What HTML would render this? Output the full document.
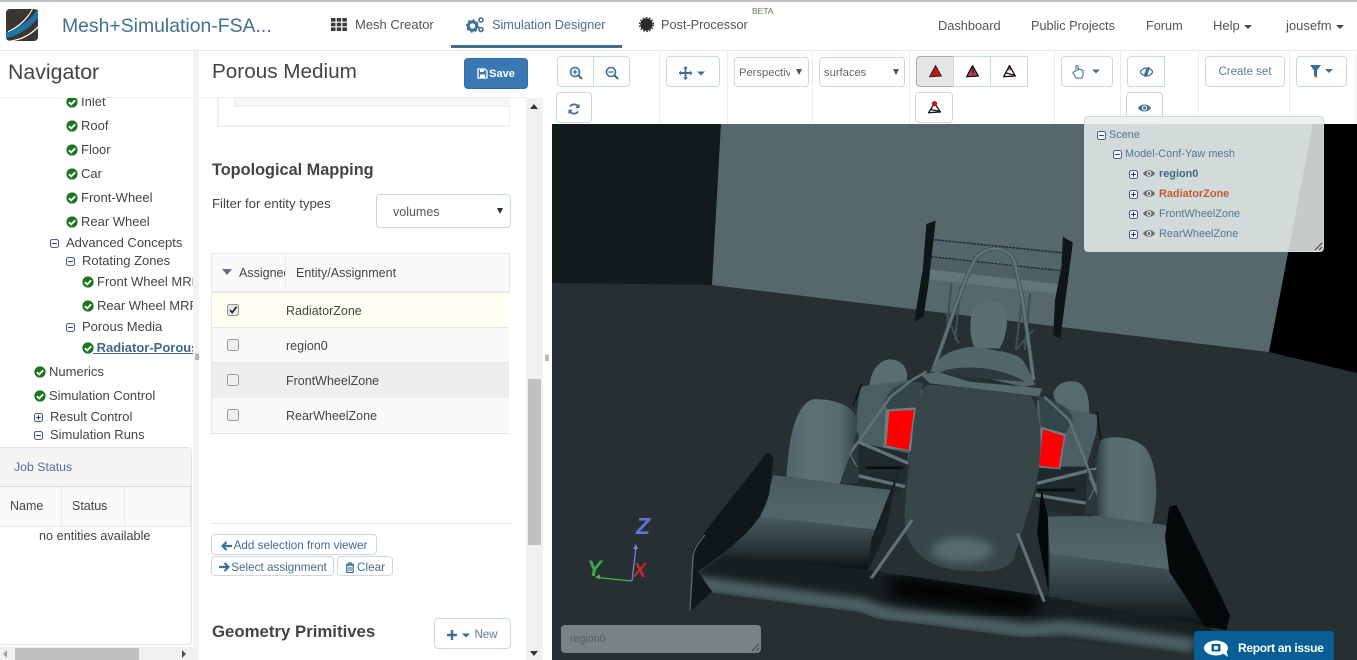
<!DOCTYPE html>
<html><head><meta charset="utf-8"><title>Porous Medium</title>
<style>
html,body{margin:0;padding:0;width:1357px;height:660px;overflow:hidden;background:#fff;font-family:"Liberation Sans",sans-serif;color:#444}
.a,.t,.b{position:absolute}
.t{white-space:nowrap;line-height:20px;font-size:13px}
.b{box-sizing:border-box;border:1px solid #c9dade;border-radius:4px;background:#fff;color:#4a6a85;white-space:nowrap;display:flex;align-items:center;justify-content:center;font-size:11.7px;padding-top:2px}
svg.i{position:absolute;overflow:visible}
.sel{color:#666;justify-content:flex-start}
.v{position:absolute;width:1px;top:50px;height:74px;background:#e9eeee}
.tr{position:absolute;white-space:nowrap;font-size:10.9px;line-height:14px;color:#4f7a90}
</style></head><body>
<svg width="0" height="0" style="position:absolute">
<symbol id="ok" viewBox="0 0 12 12"><circle cx="6" cy="6" r="5.6" fill="#19761c"/><path d="M3 6.2l2.2 2.2L9.2 4.3" fill="none" stroke="#fff" stroke-width="1.9"/></symbol>
<symbol id="mi" viewBox="0 0 10 10"><rect x=".6" y=".6" width="8.8" height="8.8" rx="1.8" fill="#f4f6fb" stroke="#3b4a80"/><path d="M2.5 5h5" stroke="#2b3670" stroke-width="1.1"/></symbol>
<symbol id="pl" viewBox="0 0 10 10"><rect x=".6" y=".6" width="8.8" height="8.8" rx="1.8" fill="#f4f6fb" stroke="#3b4a80"/><path d="M2.5 5h5M5 2.5v5" stroke="#2b3670" stroke-width="1.1"/></symbol>
<symbol id="eye" viewBox="0 0 14 10"><path d="M0 5C3 0 11 0 14 5 11 10 3 10 0 5z" fill="currentColor"/><circle cx="7" cy="5" r="2.8" fill="#fff"/><circle cx="7" cy="5" r="1.7" fill="currentColor"/></symbol>
</svg>

<!-- top bar -->
<div class="a" style="left:0;top:0;width:1357px;height:2px;background:#c4c4c4"></div>
<div class="a" style="left:0;top:50px;width:1357px;height:1px;background:#e9e9e9"></div>
<svg class="i" style="left:6px;top:9px" width="32" height="32" viewBox="0 0 32 32"><rect width="32" height="32" rx="4" fill="#3b3633"/><path d="M0 23C13 20 24 11 32 0V9C24 19 12 27 0 29z" fill="#1c75a8"/><path d="M2 22C13 17 21 9 26 0h1C22 10 13 19 2 23zM0 32C13 31 24 26 32 17v2C25 26 16 31 7 32z" fill="#fff"/></svg>
<div class="t" style="left:62px;top:16px;font-size:19.4px;color:#44708f">Mesh+Simulation-FSA...</div>

<svg class="i" style="left:331px;top:18px" width="16" height="13" viewBox="0 0 16 13" fill="#3f3a38"><rect width="4.5" height="3.6"/><rect x="5.7" width="4.5" height="3.6"/><rect x="11.4" width="4.5" height="3.6"/><rect y="4.7" width="4.5" height="3.6"/><rect x="5.7" y="4.7" width="4.5" height="3.6"/><rect x="11.4" y="4.7" width="4.5" height="3.6"/><rect y="9.4" width="4.5" height="3.6"/><rect x="5.7" y="9.4" width="4.5" height="3.6"/><rect x="11.4" y="9.4" width="4.5" height="3.6"/></svg>
<div class="t" style="left:355px;top:15px;color:#555">Mesh Creator</div>
<svg class="i" style="left:466px;top:16px" width="19" height="17" viewBox="0 0 19 17"><circle cx="6.5" cy="10" r="4.2" fill="none" stroke="#3f6f95" stroke-width="3"/><circle cx="6.5" cy="10" r="6" fill="none" stroke="#3f6f95" stroke-width="1.4" stroke-dasharray="2 2.7"/><circle cx="15" cy="4" r="2" fill="none" stroke="#3f6f95" stroke-width="1.6"/><circle cx="15" cy="13.5" r="2" fill="none" stroke="#3f6f95" stroke-width="1.6"/></svg>
<div class="t" style="left:492px;top:15px;color:#4f6f88;font-size:12.7px">Simulation Designer</div>
<div class="a" style="left:451px;top:45px;width:171px;height:3px;background:#3f6f95"></div>
<svg class="i" style="left:639px;top:17px" width="15" height="15" viewBox="0 0 15 15"><circle cx="7.5" cy="7.5" r="6.2" fill="#2b2826"/><circle cx="7.5" cy="7.5" r="7" fill="none" stroke="#2b2826" stroke-width="1.2" stroke-dasharray="1.6 1.6"/></svg>
<div class="t" style="left:661px;top:15px;color:#555;font-size:12.7px">Post-Processor</div>
<div class="t" style="left:752px;top:1px;font-size:8.5px;color:#5d7d50">BETA</div>

<div class="t" style="left:938px;top:16px;color:#555;font-size:12.8px">Dashboard</div>
<div class="t" style="left:1031px;top:16px;color:#555;font-size:12.7px">Public Projects</div>
<div class="t" style="left:1146px;top:16px;color:#555;font-size:12.7px">Forum</div>
<div class="t" style="left:1213px;top:16px;color:#555">Help</div>
<div class="a" style="left:1244px;top:25px;border:4px solid transparent;border-top-color:#444;border-bottom:0"></div>
<div class="t" style="left:1286px;top:16px;color:#555">jousefm</div>
<div class="a" style="left:1336px;top:25px;border:4px solid transparent;border-top-color:#444;border-bottom:0"></div>

<!-- navigator -->
<div class="a" style="left:193px;top:51px;width:6px;height:609px;background:#f3f3f3"></div>
<div class="t" style="left:8px;top:62px;font-size:21.3px;color:#444">Navigator</div>
<div class="a" style="left:0;top:97px;width:193px;height:1px;background:#eee"></div>
<div class="a" style="left:0;top:98px;width:193px;height:349px;overflow:hidden"><div class="a" style="left:0;top:1px;width:193px;height:348px">
<svg class="i" style="left:66px;top:-3px" width="12" height="12"><use href="#ok"/></svg><div class="t" style="left:81px;top:-7px">Inlet</div>
<svg class="i" style="left:66px;top:21px" width="12" height="12"><use href="#ok"/></svg><div class="t" style="left:81px;top:17px">Roof</div>
<svg class="i" style="left:66px;top:45px" width="12" height="12"><use href="#ok"/></svg><div class="t" style="left:81px;top:41px">Floor</div>
<svg class="i" style="left:66px;top:69px" width="12" height="12"><use href="#ok"/></svg><div class="t" style="left:81px;top:65px">Car</div>
<svg class="i" style="left:66px;top:93px" width="12" height="12"><use href="#ok"/></svg><div class="t" style="left:81px;top:89px">Front-Wheel</div>
<svg class="i" style="left:66px;top:117px" width="12" height="12"><use href="#ok"/></svg><div class="t" style="left:81px;top:113px">Rear Wheel</div>
<svg class="i" style="left:50px;top:140px" width="9" height="9"><use href="#mi"/></svg><div class="t" style="left:66px;top:134px">Advanced Concepts</div>
<svg class="i" style="left:66px;top:158px" width="9" height="9"><use href="#mi"/></svg><div class="t" style="left:82px;top:152px">Rotating Zones</div>
<svg class="i" style="left:82px;top:177px" width="12" height="12"><use href="#ok"/></svg><div class="t" style="left:97px;top:173px">Front Wheel MRF</div>
<svg class="i" style="left:82px;top:201px" width="12" height="12"><use href="#ok"/></svg><div class="t" style="left:97px;top:197px">Rear Wheel MRF</div>
<svg class="i" style="left:66px;top:224px" width="9" height="9"><use href="#mi"/></svg><div class="t" style="left:82px;top:218px">Porous Media</div>
<svg class="i" style="left:82px;top:243px" width="12" height="12"><use href="#ok"/></svg><div class="t" style="left:93px;top:239px;font-weight:bold;color:#40688a;text-decoration:underline">&nbsp;Radiator-Porous</div>
<svg class="i" style="left:34px;top:267px" width="12" height="12"><use href="#ok"/></svg><div class="t" style="left:49px;top:263px">Numerics</div>
<svg class="i" style="left:34px;top:291px" width="12" height="12"><use href="#ok"/></svg><div class="t" style="left:49px;top:287px">Simulation Control</div>
<svg class="i" style="left:34px;top:314px" width="9" height="9"><use href="#pl"/></svg><div class="t" style="left:50px;top:308px">Result Control</div>
<svg class="i" style="left:34px;top:332px" width="9" height="9"><use href="#mi"/></svg><div class="t" style="left:50px;top:326px">Simulation Runs</div>
</div></div>
<!-- job status -->
<div class="a" style="left:-2px;top:447px;width:194px;height:198px;box-sizing:border-box;border:1px solid #e4e4e4;border-radius:4px;background:#fff"></div>
<div class="a" style="left:0;top:448px;width:191px;height:38px;background:#f5f5f5;border-bottom:1px solid #ddd"></div>
<div class="t" style="left:14px;top:457px;font-size:12.3px;color:#4f6f93">Job Status</div>
<div class="a" style="left:0;top:487px;width:190px;height:39px;background:#fafafa;border-bottom:1px solid #e8e8e8;border-right:1px solid #e8e8e8"></div>
<div class="a" style="left:61px;top:487px;width:1px;height:39px;background:#e8e8e8"></div>
<div class="a" style="left:124px;top:487px;width:1px;height:39px;background:#e8e8e8"></div>
<div class="t" style="left:10px;top:496px;font-size:12.5px">Name</div>
<div class="t" style="left:72px;top:496px;font-size:12.5px">Status</div>
<div class="t" style="left:39px;top:526px;font-size:12.7px">no entities available</div>
<div class="a" style="left:0;top:647px;width:193px;height:13px;background:#f1f1f1"></div>
<div class="a" style="left:15px;top:648px;width:124px;height:12px;background:#c1c1c1"></div>
<div class="a" style="left:3px;top:650px;border:4px solid transparent;border-right-color:#a3a3a3;border-left:0"></div>
<div class="a" style="left:182px;top:650px;border:4px solid transparent;border-left-color:#505050;border-right:0"></div>

<!-- porous medium panel -->
<div class="t" style="left:212px;top:62px;font-size:20.7px;color:#444">Porous Medium</div>
<div class="b" style="left:464px;top:58px;width:64px;height:31px;padding-top:0;background:#3a78b3;border-color:#2f6ca5;color:#fff;font-weight:bold;font-size:11px"><svg width="11" height="11" viewBox="0 0 11 11" style="margin-right:1px"><path d="M1 1h7l2 2v7H1z" fill="none" stroke="#fff" stroke-width="1.3"/><path d="M3 1.5h4v2.5H3zM3 6.5h5v3H3z" fill="#fff"/></svg>Save</div>
<div class="a" style="left:199px;top:97px;width:328px;height:1px;background:#eee"></div>
<div class="a" style="left:217px;top:98px;width:293px;height:29px;box-sizing:border-box;border:2px solid #eee;border-top:0;border-right:1px solid #eee"></div>
<div class="a" style="left:234px;top:98px;width:276px;height:9px;background:#f5f5f5;border-left:2px solid #eee;border-bottom:1px solid #eee;box-sizing:border-box"></div>
<div class="t" style="left:212px;top:160px;font-size:16.3px;font-weight:bold;color:#444">Topological Mapping</div>
<div class="t" style="left:212px;top:194px;font-size:13.2px;color:#444">Filter for entity types</div>
<div class="b sel" style="left:376px;top:194px;width:135px;height:34px;padding-left:16px;font-size:12.5px;color:#555">volumes</div>
<div class="a" style="left:497px;top:208px;border:3.5px solid transparent;border-top:6px solid #333;border-bottom:0"></div>

<div class="a" style="left:211px;top:253px;width:299px;height:40px;background:#fafafa;border:1px solid #e8e8e8;border-bottom:2px solid #e8e8e8;box-sizing:border-box"></div>
<div class="a" style="left:285px;top:254px;width:1px;height:38px;background:#e8e8e8"></div>
<div class="a" style="left:222px;top:269px;border:5px solid transparent;border-top:6px solid #667080;border-bottom:0"></div>
<div class="a" style="left:239px;top:263px;width:46px;overflow:hidden"><div class="t" style="position:static;font-size:12.5px">Assigned</div></div>
<div class="t" style="left:296px;top:263px;font-size:12.5px">Entity/Assignment</div>
<div class="a" style="left:211px;top:293px;width:298px;height:35px;background:#fffff2;border-left:1px solid #e8e8e8;border-bottom:1px solid #e8e8e8;box-sizing:border-box"></div>
<div class="a" style="left:211px;top:328px;width:298px;height:35px;background:#fafafa;border-left:1px solid #e8e8e8;border-bottom:1px solid #e8e8e8;box-sizing:border-box"></div>
<div class="a" style="left:211px;top:363px;width:298px;height:35px;background:#eee;border-left:1px solid #e8e8e8;box-sizing:border-box"></div>
<div class="a" style="left:211px;top:398px;width:298px;height:36px;background:#fafafa;border-left:1px solid #e8e8e8;border-bottom:1px solid #e4e4e4;box-sizing:border-box"></div>
<div class="a" style="left:227px;top:304px;width:12px;height:12px;box-sizing:border-box;border:1px solid #8f8f8f;border-radius:2.5px;background:#e8e8e8"></div>
<svg class="i" style="left:227px;top:304px" width="12" height="12"><path d="M3 6l2.2 2.5L9.5 2.8" fill="none" stroke="#222" stroke-width="1.7"/></svg>
<div class="a" style="left:227px;top:339px;width:12px;height:12px;box-sizing:border-box;border:1px solid #9a9a9a;border-radius:2.5px;background:#efefef"></div>
<div class="a" style="left:227px;top:374px;width:12px;height:12px;box-sizing:border-box;border:1px solid #9a9a9a;border-radius:2.5px;background:#efefef"></div>
<div class="a" style="left:227px;top:409px;width:12px;height:12px;box-sizing:border-box;border:1px solid #9a9a9a;border-radius:2.5px;background:#efefef"></div>
<div class="t" style="left:286px;top:301px;font-size:12.5px">RadiatorZone</div>
<div class="t" style="left:286px;top:336px;font-size:12.5px">region0</div>
<div class="t" style="left:286px;top:371px;font-size:12.5px">FrontWheelZone</div>
<div class="t" style="left:286px;top:406px;font-size:12.5px">RearWheelZone</div>

<div class="a" style="left:211px;top:523px;width:300px;height:1px;background:#e3e9ea"></div>
<div class="b" style="left:211px;top:534px;width:166px;height:21px"><svg width="12" height="10" viewBox="0 0 12 10" style="margin-right:1px"><path d="M11 5H2M5.5 1L1.5 5l4 4" fill="none" stroke="#3f6f95" stroke-width="2.2"/></svg>Add selection from viewer</div>
<div class="b" style="left:211px;top:556px;width:123px;height:20px"><svg width="12" height="10" viewBox="0 0 12 10" style="margin-right:1px"><path d="M1 5h9M6.5 1l4 4-4 4" fill="none" stroke="#3f6f95" stroke-width="2.2"/></svg>Select assignment</div>
<div class="b" style="left:337px;top:556px;width:56px;height:20px"><svg width="10" height="11" viewBox="0 0 10 11" style="margin-right:2px"><path d="M1 2.5h8M3.5 2.5V1h3v1.5M1.8 3v7.5h6.4V3z" fill="none" stroke="#3f6f95" stroke-width="1.3"/><path d="M4 4.5v4.5M6 4.5v4.5" stroke="#3f6f95"/></svg>Clear</div>
<div class="t" style="left:212px;top:622px;font-size:16.8px;font-weight:bold;color:#444">Geometry Primitives</div>
<div class="b" style="left:434px;top:618px;width:77px;height:31px;font-size:11.5px;color:#5b7c95"><svg width="24" height="10" viewBox="0 0 24 10" style="margin-right:3px"><path d="M5 0v10M0 5h10" stroke="#3f6f95" stroke-width="2.4"/><path d="M15 3.5h8l-4 4z" fill="#3f6f95"/></svg>New</div>

<div class="a" style="left:526px;top:98px;width:17px;height:562px;background:#f1f1f1"></div>
<div class="a" style="left:528px;top:379px;width:13px;height:166px;background:#c1c1c1"></div>
<div class="a" style="left:530px;top:104px;border:4px solid transparent;border-bottom:5px solid #333;border-top:0"></div>
<div class="a" style="left:530px;top:651px;border:4px solid transparent;border-top:5px solid #333;border-bottom:0"></div>
<div class="t" style="left:545px;top:348px;font-size:9px;color:#555">ll</div>
<div class="t" style="left:195px;top:347px;font-size:9px;color:#555">ll</div>

<!-- toolbar -->
<div class="v" style="left:659px"></div><div class="v" style="left:727px"></div><div class="v" style="left:812px"></div><div class="v" style="left:909px"></div><div class="v" style="left:1054px"></div><div class="v" style="left:1120px"></div><div class="v" style="left:1198px"></div><div class="v" style="left:1289px"></div><div class="v" style="left:1355px"></div>

<div class="b" style="left:557px;top:56px;width:37px;height:31px;border-radius:4px 0 0 4px"><svg width="14" height="14" viewBox="0 0 14 14"><circle cx="6" cy="6" r="4.5" fill="none" stroke="#3f6f95" stroke-width="1.6"/><path d="M9.5 9.5L13 13" stroke="#3f6f95" stroke-width="2.2"/><path d="M3.5 6h5M6 3.5v5" stroke="#3f6f95" stroke-width="1.3"/></svg></div>
<div class="b" style="left:593px;top:56px;width:37px;height:31px;border-radius:0 4px 4px 0"><svg width="14" height="14" viewBox="0 0 14 14"><circle cx="6" cy="6" r="4.5" fill="none" stroke="#3f6f95" stroke-width="1.6"/><path d="M9.5 9.5L13 13" stroke="#3f6f95" stroke-width="2.2"/><path d="M3.5 6h5" stroke="#3f6f95" stroke-width="1.3"/></svg></div>
<div class="b" style="left:556px;top:92px;width:36px;height:31px"><svg width="12" height="12" viewBox="0 0 12 12"><path d="M10.5 4.5A4.8 4.8 0 0 0 2 3.5M1.5 7.5A4.8 4.8 0 0 0 10 8.5" fill="none" stroke="#3f6f95" stroke-width="1.8"/><path d="M11.5 .8v4.5H7zM.5 11.2V6.7H5z" fill="#3f6f95"/></svg></div>
<div class="b" style="left:666px;top:56px;width:54px;height:31px"><svg width="28" height="14" viewBox="0 0 28 14"><path d="M6.5 0l2.5 2.5H7.400V6h3.600V4.500L13.500 7 11 9.500V8H7.400v3.500H9L6.500 14 4 11.500h1.600V8H2v1.500L-.5 7 2 4.500V6h3.600V2.500H4z" fill="#3f6f95"/><path d="M18 5.500h8l-4 4z" fill="#3f6f95"/></svg></div>
<div class="b sel" style="left:734px;top:57px;width:75px;height:30px;padding-left:4px;font-size:11.2px;overflow:hidden"><span style="width:51px;overflow:hidden;display:block">Perspective</span></div>
<div class="a" style="left:796px;top:69px;border:3.5px solid transparent;border-top:6px solid #555;border-bottom:0"></div>
<div class="b sel" style="left:819px;top:57px;width:86px;height:30px;padding-left:4px;font-size:11.2px">surfaces</div>
<div class="a" style="left:893px;top:69px;border:3.5px solid transparent;border-top:6px solid #555;border-bottom:0"></div>

<div class="b" style="left:916px;top:56px;width:38px;height:31px;padding-top:0;background:#e6e6e6;border-color:#adadad;border-radius:4px 0 0 4px"><svg width="13" height="13" viewBox="0 0 20 20"><path d="M10 1L1 18l18-1z" fill="#c8101a" stroke="#222" stroke-width="1.5"/></svg></div>
<div class="b" style="left:953px;top:56px;width:38px;height:31px;padding-top:0;border-radius:0"><svg width="13" height="13" viewBox="0 0 20 20"><path d="M10 1L1 18l18-1z" fill="#c8404a" stroke="#111" stroke-width="2"/><path d="M10 1l1 13" stroke="#222" stroke-width="2"/></svg></div>
<div class="b" style="left:990px;top:56px;width:38px;height:31px;padding-top:0;border-radius:0"><svg width="13" height="13" viewBox="0 0 20 20"><path d="M10 1L7 8h6z" fill="#c55"/><path d="M10 1L1 18l18-1zM4 12l14 4" fill="none" stroke="#111" stroke-width="2"/></svg></div>
<div class="b" style="left:915px;top:92px;width:38px;height:31px;padding-top:0"><svg width="13" height="13" viewBox="0 0 20 20"><path d="M10 3L1 18l18-1zM4 13l14 3" fill="none" stroke="#111" stroke-width="2"/><circle cx="10" cy="4" r="4" fill="#c8101a"/></svg></div>

<div class="b" style="left:1061px;top:56px;width:52px;height:31px;padding-top:0;color:#3f6f95"><svg width="30" height="15" viewBox="0 0 30 15"><path d="M4 7V3c0-2 2-2 2 0v3l1-1 1 .5 1 0 1 .5 1 .5v5l-1 2.5H4L1 9c0-1 1-1.500 3-2z" fill="#fff" stroke="#3f6f95" stroke-width="1.1"/><path d="M20 5.5h8l-4 4z" fill="#3f6f95"/></svg></div>
<div class="b" style="left:1127px;top:56px;width:38px;height:31px;padding-top:0;border-radius:4px 0 0 4px;color:#3f6f95"><svg width="13" height="10" viewBox="0 0 13 10"><path d="M0 5C2 2 4.5 1 7 1L4.5 8.5C3 8 1.5 7 0 5zM13 5C11 8 8.5 9 6.5 9L9 1.5C10.5 2 12 3 13 5z" fill="none" stroke="#3f6f95" stroke-width="1.3"/><path d="M9 0L5 10" stroke="#3f6f95" stroke-width="1.5"/></svg></div>
<div class="b" style="left:1126px;top:92px;width:37px;height:31px;padding-top:0;color:#3f6f95"><svg width="13" height="10"><use href="#eye"/></svg></div>
<div class="b" style="left:1205px;top:56px;width:80px;height:31px;padding-top:0;color:#5b7c95;font-size:11.5px">Create set</div>
<div class="b" style="left:1296px;top:56px;width:51px;height:31px;padding-top:0"><svg width="24" height="13" viewBox="0 0 24 13"><path d="M0 0h11L7 5.5V13L4 11V5.5z" fill="#3f6f95"/><path d="M15 4h8l-4 4z" fill="#3f6f95"/></svg></div>

<!-- viewer -->
<svg class="a" style="left:552px;top:124px" width="805" height="536" viewBox="552 124 805 536">
<defs>
<linearGradient id="g1" x1="0" y1="0" x2="0" y2="1"><stop offset="0" stop-color="#4a5c61"/><stop offset=".55" stop-color="#2a383b"/><stop offset="1" stop-color="#0c1214"/></linearGradient>
<linearGradient id="g0" x1="0" y1="0" x2="0" y2="1"><stop offset="0" stop-color="#495b60"/><stop offset="1" stop-color="#55686d"/></linearGradient>
<linearGradient id="g3" x1="0" y1="0" x2="1" y2="0"><stop offset="0" stop-color="#52656a"/><stop offset=".35" stop-color="#5e7176"/><stop offset=".75" stop-color="#586b70"/><stop offset="1" stop-color="#34454a"/></linearGradient>
<linearGradient id="g4" x1="0" y1="0" x2="1" y2="0"><stop offset="0" stop-color="#2e3f43"/><stop offset=".2" stop-color="#56696e"/><stop offset=".7" stop-color="#5b6e73"/><stop offset="1" stop-color="#4e6166"/></linearGradient>
<clipPath id="cp"><path d="M40 1140C60 1110 90 1090 120 1068L525 1110 1035 1190 1480 1280 1540 1345 1430 1365 1000 1310C970 1315 950 1312 900 1305L600 1262C560 1262 530 1250 510 1238L40 1172z"/></clipPath>
<filter id="b8" x="-30%" y="-60%" width="160%" height="220%"><feGaussianBlur stdDeviation="12"/></filter>
<filter id="b20" x="-30%" y="-60%" width="160%" height="220%"><feGaussianBlur stdDeviation="22"/></filter>
</defs>
<rect x="552" y="124" width="805" height="536" fill="#262f31"/>
<path d="M552 124H721L712 285 552 283z" fill="#131a1b"/>
<path d="M721 124H1313L1269 352 712 285z" fill="#56686c"/>
<path d="M1313 124H1357V373L1269 352z" fill="#000"/>
<g transform="translate(680 200) scale(.35714 .33333)">
<!-- rear wing -->
<path d="M700 115L1070 155 1075 285 675 235z" fill="#4e6065"/>
<path d="M703 122L1066 165V210L703 170z" fill="#53666b"/>
<path d="M703 118L1068 158M703 170L1066 212" stroke="#20292b" stroke-width="4" stroke-dasharray="7 3"/>
<path d="M675 205L1080 255V285L675 235z" fill="#62767b"/>
<path d="M690 72L716 62 696 250 682 350 657 365 664 310 680 205z" fill="#0e1618"/>
<path d="M1072 110L1100 128 1084 260 1065 415 1045 405 1050 300 1068 200z" fill="#0e1618"/>
<!-- struts behind head -->
<path d="M760 250L745 410M785 260L770 420M980 280L965 450M960 280L940 450M745 340L780 430M990 390L940 450" stroke="#3f5055" stroke-width="6" fill="none"/>
<path d="M710 505C760 360 790 250 825 180 850 135 915 135 935 180 960 280 975 420 990 540" fill="none" stroke="#3c4c51" stroke-width="12"/>
<path d="M710 505C760 360 790 250 825 180 850 135 915 135 935 180 960 280 975 420 990 540" fill="none" stroke="#5f7378" stroke-width="8"/>
<!-- head, shoulders -->
<path d="M825 445C815 420 810 390 815 350 825 290 905 285 915 345 918 395 905 425 895 445z" fill="#5b6e73"/>
<path d="M700 515C720 470 760 445 825 440 870 450 930 455 955 475 975 500 985 535 995 555L960 560 800 520z" fill="#52656a"/>
<path d="M730 515C780 495 890 495 965 545L780 530z" fill="#2c3a3d"/>
<!-- rear tyres, sidepods -->
<path d="M530 570C530 510 560 478 590 478 625 480 640 510 635 540L620 600H540z" fill="#5a6d72"/>
<path d="M1045 580C1055 550 1080 540 1110 545 1140 555 1148 600 1145 650L1060 640z" fill="#566a6f"/>
<path d="M490 680L505 560 640 540 680 570 640 780H520z" fill="#4b5e63"/>
<path d="M1000 600L1100 630 1170 645 1165 700 1110 900H1000z" fill="#4b5e63"/>
<path d="M510 550L485 615" stroke="#0f1719" stroke-width="5"/>
<path d="M1168 635L1178 720" stroke="#0f1719" stroke-width="5"/>
<path d="M575 600C590 550 640 540 680 550L660 640 580 640z" fill="#35464a"/>
<path d="M1005 590C1050 600 1095 620 1100 660L1080 700 1010 680z" fill="#35464a"/>
<path d="M470 720L640 760 620 880 450 860zM1000 800L1170 800 1170 950 1000 930z" fill="#1f2a2c"/>
<!-- red zones -->
<path d="M576 628L660 622 660 755 570 742z" fill="#6f7d80"/>
<path d="M586 634L655 630 640 750 578 736z" fill="#f00"/>
<path d="M1010 680L1080 702 1065 808 1000 802z" fill="#6f7d80"/>
<path d="M1016 688L1075 708 1060 804 1006 797z" fill="#f00"/>
<!-- suspension -->
<path d="M520 803H625" stroke="#0a0f10" stroke-width="8"/>
<path d="M1000 870H1105" stroke="#0a0f10" stroke-width="8"/>
<path d="M465 710L640 790M450 815L630 860M1170 805L1000 850M1170 915L995 885" stroke="#5f7378" stroke-width="10"/>
<path d="M470 700L450 850 500 850 500 700zM1140 810L1180 810 1170 950 1135 940z" fill="#2b383b"/>
<path d="M460 730L495 800M490 730L455 810M1145 830L1175 900M1175 830L1145 900" stroke="#697b80" stroke-width="3"/>
<path d="M690 515L650 540 590 590 470 770M1020 590L1090 660 1170 880" fill="none" stroke="#5f7378" stroke-width="7"/>
<!-- front tyres -->
<path d="M298 830C305 720 320 620 370 598 420 595 475 610 495 650 505 690 465 790 448 852z" fill="url(#g3)"/>
<path d="M1170 950C1170 880 1155 780 1180 720 1205 705 1270 710 1300 740 1340 790 1340 890 1322 972z" fill="url(#g4)"/>
<!-- main plane -->
<g clip-path="url(#cp)">
<rect x="0" y="1040" width="1568" height="340" fill="#161f21"/>
<path d="M40 1150L510 1218C560 1246 620 1246 700 1256L950 1290C1000 1296 1030 1280 1100 1286L1440 1338" fill="none" stroke="#4e6065" stroke-width="46" filter="url(#b8)"/>
<path d="M590 1160L1000 1215" stroke="#000" stroke-width="70" filter="url(#b20)"/>
</g>
<!-- nose -->
<path d="M690 555C760 555 900 570 985 590 1010 650 1015 720 1005 800 995 890 960 980 935 1075 915 1110 880 1118 800 1112 720 1110 670 1080 640 1020 615 960 640 830 650 720 655 640 665 590 690 555z" fill="#374749"/>
<path d="M675 525L720 515 810 545 1015 565 1005 590 900 575 700 550z" fill="#56696e"/>
<ellipse cx="790" cy="1050" rx="85" ry="38" fill="#566a6f" filter="url(#b8)"/>
<!-- front wing flaps -->
<path d="M262 825L450 852 590 870 555 990 225 950z" fill="url(#g0)"/>
<path d="M225 950L555 990 525 1110 120 1068z" fill="url(#g1)"/>
<path d="M1030 950L1170 948 1360 975 1370 1110 1035 1065z" fill="url(#g0)"/>
<path d="M1035 1060L1370 1108 1480 1280 1035 1190z" fill="url(#g1)"/>
<!-- endplates -->
<path d="M35 1050C90 960 180 850 245 755L262 775 250 880C230 960 190 1000 120 1060L50 1115 90 1175 28 1235 38 1100z" fill="#101719"/>
<path d="M28 1232L36 1080C36 1050 50 1030 70 1005" fill="none" stroke="#53666b" stroke-width="4"/>
<path d="M1370 920L1390 915 1540 1245 1530 1290 1470 1280 1370 1115 1358 1010z" fill="#050808"/>
<path d="M610 815L575 1000 527 1110 535 1020z" fill="#161f21"/>
<path d="M1012 870L1030 950 1032 1175 1000 1000z" fill="#050808"/>
<path d="M650 960L535 1135M945 1000L1020 1205" stroke="#5f7378" stroke-width="9"/>
</g>
<!-- axes -->
<path d="M632 581L636 547" stroke-width="1.2" fill="none" stroke="#7a80ea"/>
<path d="M632 581L597 577.5" stroke="#4bb558" stroke-width="1.2"/>
<path d="M636 544l-3 5h5z" fill="#7a80ea"/><path d="M595 577l5-2.5v4.5z" fill="#4bb558"/>
<text x="636" y="534" font-family="Liberation Sans" font-size="23" font-weight="bold" font-style="italic" fill="#6a6fe0">Z</text>
<text x="587" y="576" font-family="Liberation Sans" font-size="22" font-weight="bold" font-style="italic" fill="#3fa84d">Y</text>
<text x="633" y="577" font-family="Liberation Sans" font-size="20" font-weight="bold" font-style="italic" fill="#c4282c">X</text>
</svg>

<!-- tree panel -->
<div class="a" style="left:1084px;top:116px;width:240px;height:136px;box-sizing:border-box;border:1px solid #c9dade;border-radius:4px;background:rgba(235,240,240,.84)"></div>
<svg class="i" style="left:1097px;top:131px" width="9" height="9"><use href="#mi"/></svg><div class="tr" style="left:1109px;top:128px">Scene</div>
<svg class="i" style="left:1113px;top:150px" width="9" height="9"><use href="#mi"/></svg><div class="tr" style="left:1125px;top:147px">Model-Conf-Yaw mesh</div>
<svg class="i" style="left:1129px;top:170px" width="9" height="9"><use href="#pl"/></svg><svg class="i" style="left:1143px;top:169px;color:#676d68" width="12" height="9"><use href="#eye"/></svg><div class="tr" style="left:1159px;top:167px;font-weight:bold;color:#3f6b87">region0</div>
<svg class="i" style="left:1129px;top:190px" width="9" height="9"><use href="#pl"/></svg><svg class="i" style="left:1143px;top:189px;color:#676d68" width="12" height="9"><use href="#eye"/></svg><div class="tr" style="left:1159px;top:187px;font-weight:bold;color:#bf5e35">RadiatorZone</div>
<svg class="i" style="left:1129px;top:210px" width="9" height="9"><use href="#pl"/></svg><svg class="i" style="left:1143px;top:209px;color:#676d68" width="12" height="9"><use href="#eye"/></svg><div class="tr" style="left:1159px;top:207px">FrontWheelZone</div>
<svg class="i" style="left:1129px;top:230px" width="9" height="9"><use href="#pl"/></svg><svg class="i" style="left:1143px;top:229px;color:#676d68" width="12" height="9"><use href="#eye"/></svg><div class="tr" style="left:1159px;top:227px">RearWheelZone</div>
<svg class="i" style="left:1314px;top:242px" width="9" height="9"><path d="M1 8L8 1M5 8L8 5" stroke="#444" stroke-width="1"/></svg>

<!-- region textbox -->
<div class="a" style="left:561px;top:625px;width:200px;height:28px;border-radius:4px;background:#7a8384"></div>
<div class="tr" style="left:570px;top:632px;font-size:10.7px;color:#4c5f65">region0</div>
<svg class="i" style="left:751px;top:643px" width="9" height="9"><path d="M1 8L8 1M5 8L8 5" stroke="#444" stroke-width="1"/></svg>

<!-- report -->
<div class="a" style="left:1194px;top:631px;width:140px;height:29px;background:#075f96;border-radius:3px 3px 0 0"></div>
<svg class="i" style="left:1204px;top:640px" width="25" height="17" viewBox="0 0 25 17"><ellipse cx="12" cy="8" rx="12" ry="7.5" fill="#fff"/><path d="M17 12l7 5-2-8z" fill="#fff"/><rect x="7.5" y="4" width="9" height="7.5" rx="1" fill="#075f96"/><circle cx="12" cy="7.8" r="2.2" fill="#fff"/></svg>
<div class="t" style="left:1238px;top:638px;font-size:12px;font-weight:bold;color:#fff;letter-spacing:-.3px">Report an issue</div>
</body></html>
